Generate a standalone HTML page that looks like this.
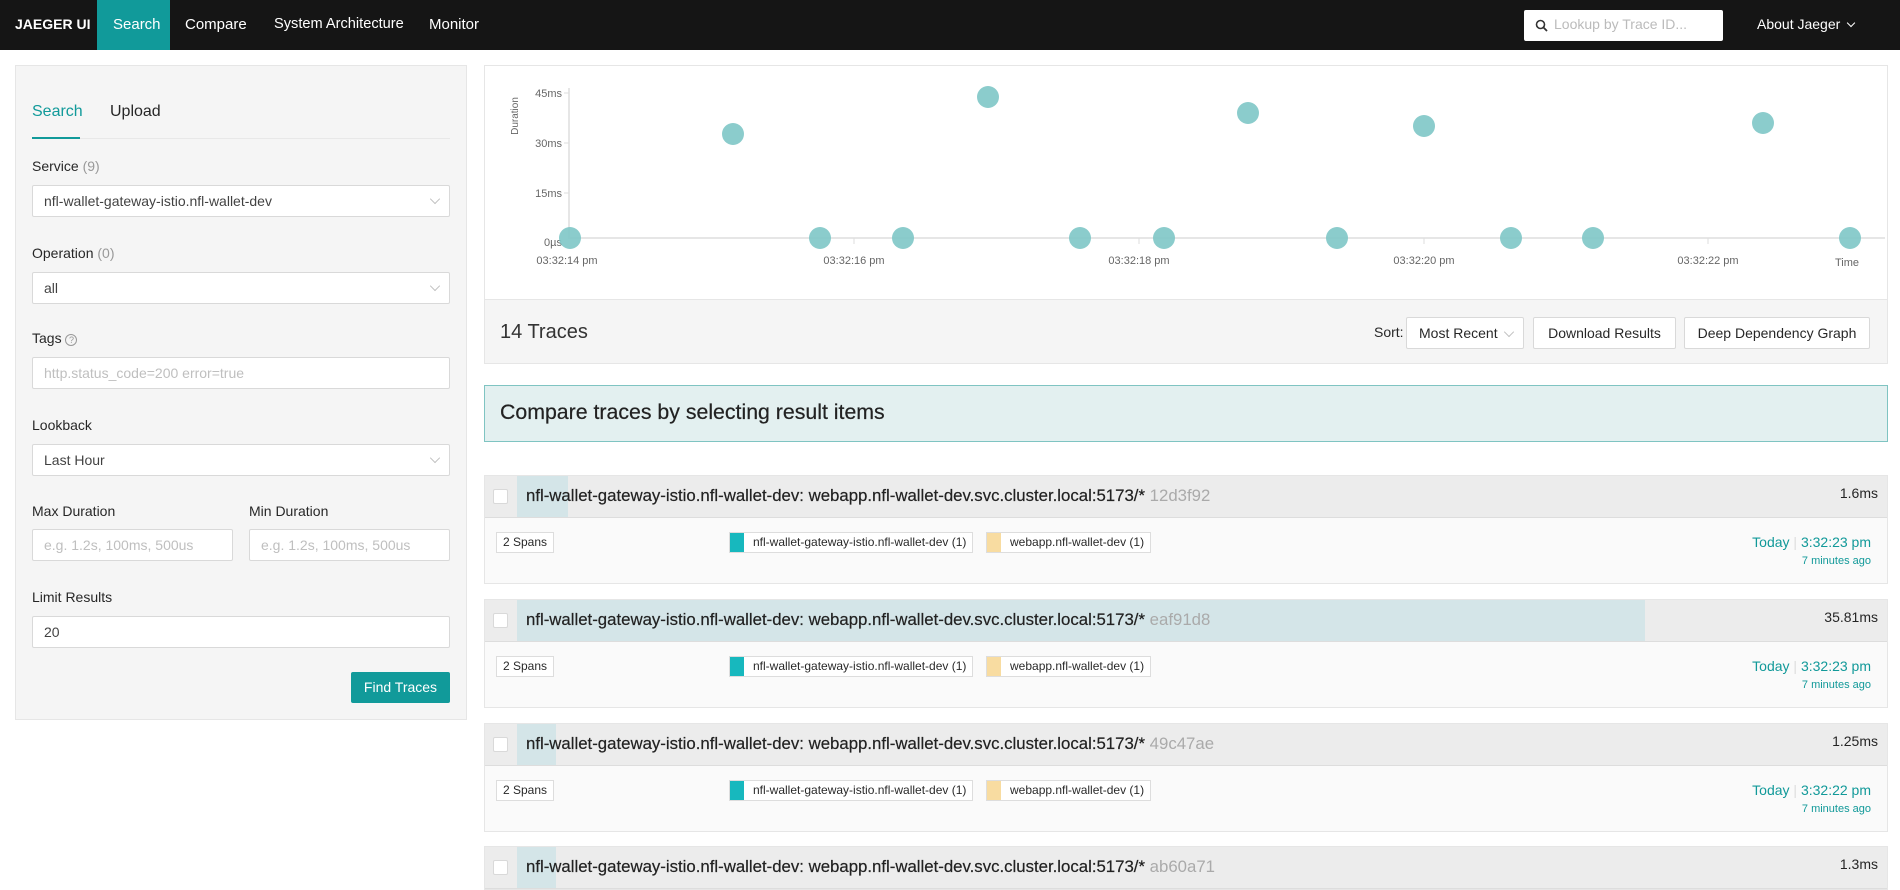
<!DOCTYPE html>
<html><head><meta charset="utf-8"><style>
*{box-sizing:border-box;margin:0;padding:0}
body{width:1900px;height:871px;overflow:hidden;background:#fff;font-family:"Liberation Sans",sans-serif;color:rgba(0,0,0,.85);position:relative}
.a{position:absolute}
.nav{left:0;top:0;width:1900px;height:50px;background:#151515;color:#fff;font-size:15px}
.nav span{position:absolute;top:16px}
.side{left:15px;top:65px;width:452px;height:655px;background:#f5f5f5;border:1px solid #e6e6e6}
.lbl{font-size:14px;color:rgba(0,0,0,.85)}
.lbl i{font-style:normal;color:#999}
.inp{background:#fff;border:1px solid #d9d9d9;border-radius:2px;height:32px;font-size:14px;padding:7px 11px;color:rgba(0,0,0,.75)}
.ph{color:#bfbfbf}
.chev{position:absolute;right:10px;top:9px;width:8px;height:8px;border-right:1px solid #bbb;border-bottom:1px solid #bbb;transform:rotate(45deg) scale(.9)}
.btn{background:#fff;border:1px solid #d9d9d9;border-radius:2px;font-size:14px;text-align:center;line-height:30px;height:32px}
.card{left:484px;width:1404px;border:1px solid #e6e6e6}
.hd{height:42px;background:#ececec;border-bottom:1px solid #ddd;position:relative}
.bd{background:#fafafa;position:relative;height:65px}
.tt{position:absolute;left:41px;top:10px;font-size:16.8px;color:#222;white-space:nowrap;-webkit-text-stroke:.2px #222}
.tt b{font-weight:normal;color:#aaa;-webkit-text-stroke:0}
.cb{position:absolute;left:8px;top:13px;width:15px;height:15px;background:#fff;border:1px solid #d9d9d9;border-radius:2px}
.dur{position:absolute;right:9px;top:9px;font-size:14px}
.bar{position:absolute;left:32px;top:0;height:41px;background:#d4e5e8}
.tag{position:absolute;top:14px;height:21px;border:1px solid #ddd;background:#fff;font-size:12px;line-height:19px;padding:0 6px;white-space:nowrap}
.sw{display:inline-block;width:14px;height:19px;vertical-align:top;margin:0 9px 0 -6px}
.dt{position:absolute;right:16px;top:16px;font-size:14px;color:#199;text-align:right}
.ago{position:absolute;right:16px;top:37px;font-size:11px;color:#199}
</style></head><body>
<div class="a nav">
<span style="left:15px;font-weight:bold;font-size:14px">JAEGER UI</span>
<div class="a" style="left:97px;top:0;width:73px;height:50px;background:#119a9a"></div>
<span style="left:113px">Search</span>
<span style="left:185px">Compare</span>
<span style="left:274px;font-size:14.6px">System Architecture</span>
<span style="left:429px">Monitor</span>
<div class="a" style="left:1524px;top:10px;width:199px;height:31px;background:#fff;border-radius:2px"></div>
<svg class="a" style="left:1535px;top:19px" width="13" height="13" viewBox="0 0 13 13"><circle cx="5.5" cy="5.5" r="4" fill="none" stroke="#333" stroke-width="1.6"/><path d="M8.5 8.5L12 12" stroke="#333" stroke-width="1.8"/></svg>
<span style="left:1554px;color:#bbb;font-size:14px">Lookup by Trace ID...</span>
<span style="left:1757px;font-size:14px">About Jaeger</span>
<div class="a" style="left:1848px;top:20px;width:6px;height:6px;border-right:1.5px solid #fff;border-bottom:1.5px solid #fff;transform:rotate(45deg)"></div>
</div>

<div class="a side"></div>
<div class="a" style="left:32px;top:103px;font-size:16px;color:#119a9a">Search</div>
<div class="a" style="left:110px;top:103px;font-size:16px">Upload</div>
<div class="a" style="left:32px;top:138px;width:418px;height:1px;background:#e8e8e8"></div>
<div class="a" style="left:32px;top:137px;width:48px;height:2px;background:#119a9a"></div>

<div class="a lbl" style="left:32px;top:158px">Service <i>(9)</i></div>
<div class="a inp" style="left:32px;top:185px;width:418px">nfl-wallet-gateway-istio.nfl-wallet-dev<div class="chev"></div></div>
<div class="a lbl" style="left:32px;top:245px">Operation <i>(0)</i></div>
<div class="a inp" style="left:32px;top:272px;width:418px">all<div class="chev"></div></div>
<div class="a lbl" style="left:32px;top:330px">Tags <span style="display:inline-block;width:12px;height:12px;border:1px solid #999;border-radius:50%;font-size:9px;line-height:10px;text-align:center;color:#999">?</span></div>
<div class="a inp ph" style="left:32px;top:357px;width:418px">http.status_code=200 error=true</div>
<div class="a lbl" style="left:32px;top:417px">Lookback</div>
<div class="a inp" style="left:32px;top:444px;width:418px">Last Hour<div class="chev"></div></div>
<div class="a lbl" style="left:32px;top:503px">Max Duration</div>
<div class="a lbl" style="left:249px;top:503px">Min Duration</div>
<div class="a inp ph" style="left:32px;top:529px;width:201px">e.g. 1.2s, 100ms, 500us</div>
<div class="a inp ph" style="left:249px;top:529px;width:201px">e.g. 1.2s, 100ms, 500us</div>
<div class="a lbl" style="left:32px;top:589px">Limit Results</div>
<div class="a inp" style="left:32px;top:616px;width:418px">20</div>
<div class="a" style="left:351px;top:672px;width:99px;height:31px;background:#119a9a;color:#fff;font-size:14px;text-align:center;line-height:31px;border-radius:2px">Find Traces</div>

<div class="a" style="left:484px;top:65px;width:1404px;height:299px;border:1px solid #e6e6e6"></div>
<svg class="a" style="left:485px;top:66px" width="1402" height="232">
<g font-family="Liberation Sans,sans-serif" font-size="11" fill="#666">
<text x="33" y="50" transform="rotate(-90 33 50)" text-anchor="middle" font-size="10">Duration</text>
<text x="77" y="31" text-anchor="end">45ms</text>
<text x="77" y="81" text-anchor="end">30ms</text>
<text x="77" y="131" text-anchor="end">15ms</text>
<text x="77" y="180" text-anchor="end">0µs</text>
<text x="82" y="198" text-anchor="middle">03:32:14 pm</text>
<text x="369" y="198" text-anchor="middle">03:32:16 pm</text>
<text x="654" y="198" text-anchor="middle">03:32:18 pm</text>
<text x="939" y="198" text-anchor="middle">03:32:20 pm</text>
<text x="1223" y="198" text-anchor="middle">03:32:22 pm</text>
<text x="1362" y="200" text-anchor="middle">Time</text>
</g>
<path d="M84 22V172H1400" stroke="#e6e6e6" stroke-width="2" fill="none"/>
<path d="M79 27H84M79 77H84M79 127H84M369 172V178M654 172V178M939 172V178M1223 172V178" stroke="#ddd"/>
<g fill="#7ec6c6" fill-opacity=".9">
<circle cx="85" cy="172" r="11"/><circle cx="248" cy="68" r="11"/><circle cx="335" cy="172" r="11"/><circle cx="418" cy="172" r="11"/><circle cx="503" cy="31" r="11"/><circle cx="595" cy="172" r="11"/><circle cx="679" cy="172" r="11"/><circle cx="763" cy="47" r="11"/><circle cx="852" cy="172" r="11"/><circle cx="939" cy="60" r="11"/><circle cx="1026" cy="172" r="11"/><circle cx="1108" cy="172" r="11"/><circle cx="1278" cy="57" r="11"/><circle cx="1365" cy="172" r="11"/>
</g></svg>
<div class="a" style="left:485px;top:299px;width:1402px;height:64px;background:#f5f5f5;border-top:1px solid #e6e6e6"></div>
<div class="a" style="left:500px;top:321px;font-size:20px;color:#333">14 Traces</div>
<div class="a" style="left:1374px;top:324px;font-size:14px">Sort:</div>
<div class="a btn" style="left:1406px;top:317px;width:118px;text-align:left;padding-left:12px">Most Recent<div class="chev" style="top:10px"></div></div>
<div class="a btn" style="left:1533px;top:317px;width:143px">Download Results</div>
<div class="a btn" style="left:1684px;top:317px;width:186px">Deep Dependency Graph</div>

<div class="a" style="left:484px;top:385px;width:1404px;height:57px;background:#e3f0f0;border:1px solid #7fc4c2"></div>
<div class="a" style="left:500px;top:400px;font-size:21.3px;color:#222;-webkit-text-stroke:.2px #222">Compare traces by selecting result items</div>

<div class="a card" style="top:475px"><div class="hd"><div class="bar" style="width:51px"></div><div class="cb"></div><div class="tt">nfl-wallet-gateway-istio.nfl-wallet-dev: webapp.nfl-wallet-dev.svc.cluster.local:5173/* <b>12d3f92</b></div><div class="dur">1.6ms</div></div>
<div class="bd"><div class="tag" style="left:11px">2 Spans</div><div class="tag" style="left:244px"><span class="sw" style="background:#17b8be"></span>nfl-wallet-gateway-istio.nfl-wallet-dev (1)</div><div class="tag" style="left:501px"><span class="sw" style="background:#f8dca1"></span>webapp.nfl-wallet-dev (1)</div><div class="dt">Today <span style="color:#ddd">|</span> 3:32:23 pm</div><div class="ago">7 minutes ago</div></div></div>

<div class="a card" style="top:599px"><div class="hd"><div class="bar" style="width:1128px"></div><div class="cb"></div><div class="tt">nfl-wallet-gateway-istio.nfl-wallet-dev: webapp.nfl-wallet-dev.svc.cluster.local:5173/* <b>eaf91d8</b></div><div class="dur">35.81ms</div></div>
<div class="bd"><div class="tag" style="left:11px">2 Spans</div><div class="tag" style="left:244px"><span class="sw" style="background:#17b8be"></span>nfl-wallet-gateway-istio.nfl-wallet-dev (1)</div><div class="tag" style="left:501px"><span class="sw" style="background:#f8dca1"></span>webapp.nfl-wallet-dev (1)</div><div class="dt">Today <span style="color:#ddd">|</span> 3:32:23 pm</div><div class="ago">7 minutes ago</div></div></div>

<div class="a card" style="top:723px"><div class="hd"><div class="bar" style="width:39px"></div><div class="cb"></div><div class="tt">nfl-wallet-gateway-istio.nfl-wallet-dev: webapp.nfl-wallet-dev.svc.cluster.local:5173/* <b>49c47ae</b></div><div class="dur">1.25ms</div></div>
<div class="bd"><div class="tag" style="left:11px">2 Spans</div><div class="tag" style="left:244px"><span class="sw" style="background:#17b8be"></span>nfl-wallet-gateway-istio.nfl-wallet-dev (1)</div><div class="tag" style="left:501px"><span class="sw" style="background:#f8dca1"></span>webapp.nfl-wallet-dev (1)</div><div class="dt">Today <span style="color:#ddd">|</span> 3:32:22 pm</div><div class="ago">7 minutes ago</div></div></div>

<div class="a card" style="top:846px"><div class="hd"><div class="bar" style="width:39px"></div><div class="cb"></div><div class="tt">nfl-wallet-gateway-istio.nfl-wallet-dev: webapp.nfl-wallet-dev.svc.cluster.local:5173/* <b>ab60a71</b></div><div class="dur">1.3ms</div></div></div>
</body></html>
